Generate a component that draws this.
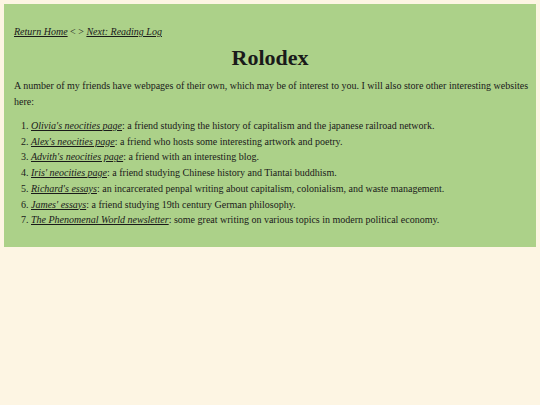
import React from 'react';

const friends = [
  { name: "Olivia's neocities page", desc: 'a friend studying the history of capitalism and the japanese railroad network.' },
  { name: "Alex's neocities page", desc: 'a friend who hosts some interesting artwork and poetry.' },
  { name: "Advith's neocities page", desc: 'a friend with an interesting blog.' },
  { name: "Iris' neocities page", desc: 'a friend studying Chinese history and Tiantai buddhism.' },
  { name: "Richard's essays", desc: 'an incarcerated penpal writing about capitalism, colonialism, and waste management.' },
  { name: "James' essays", desc: 'a friend studying 19th century German philosophy.' },
  { name: 'The Phenomenal World newsletter', desc: 'some great writing on various topics in modern political economy.' },
];

const App = () => {
  return (
    <div className="min-h-screen bg-[#fdf5e3] p-[4px] font-['Liberation_Serif',Georgia,serif] text-[#1a1a1a]">
      <div className="bg-[#acd189] pl-[10px] pr-[4px] pt-[20px] pb-[19px]">
        <p className="text-[10px] leading-[16px]">
          <a href="#" className="italic underline">Return Home</a> &lt; &gt;{' '}
          <a href="#" className="italic underline">Next: Reading Log</a>
        </p>

        <h1 className="text-center text-[22px] font-bold leading-[26px] mt-[5px] pr-[6px]">Rolodex</h1>

        <p className="text-[10px] leading-[16px] mt-[7px]">
          A number of my friends have webpages of their own, which may be of interest to you. I will also store other
          interesting websites here:
        </p>

        <ol className="list-decimal pl-[17px] mt-[8px] text-[10px] leading-[15.7px]">
          {friends.map((f) => (
            <li key={f.name}>
              <a href="#" className="italic underline">{f.name}</a>: {f.desc}
            </li>
          ))}
        </ol>
      </div>
    </div>
  );
};

export default App;
